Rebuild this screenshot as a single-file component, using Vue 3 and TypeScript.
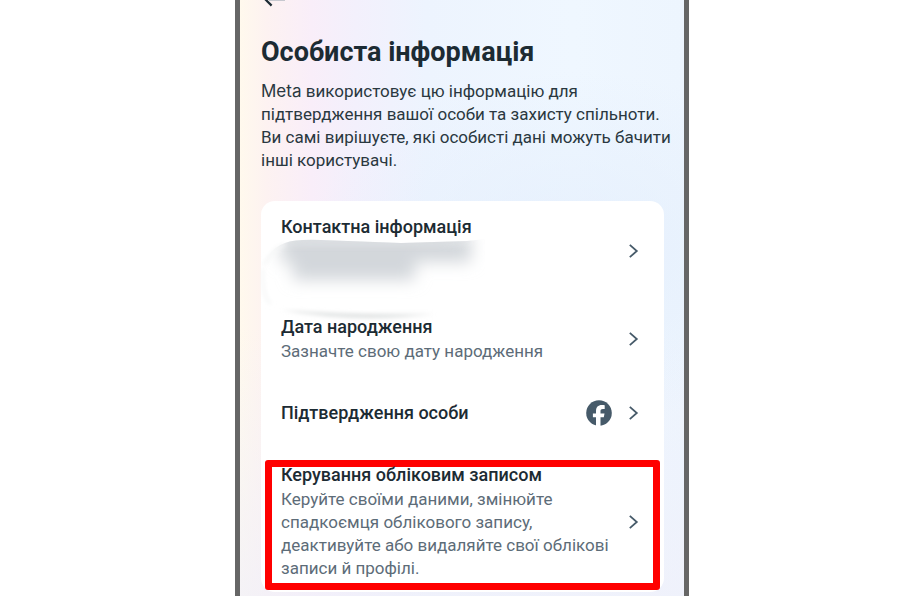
<script setup lang="ts">
interface Row {
  title: string
  description?: string
  redacted?: boolean
  facebook?: boolean
  highlighted?: boolean
}

const rows: Row[] = [
  { title: 'Контактна інформація', redacted: true },
  { title: 'Дата народження', description: 'Зазначте свою дату народження' },
  { title: 'Підтвердження особи', facebook: true },
  {
    title: 'Керування обліковим записом',
    description:
      'Керуйте своїми даними, змінюйте спадкоємця облікового запису, деактивуйте або видаляйте свої облікові записи й профілі.',
    highlighted: true,
  },
]
</script>

<template>
  <div class="page">
    <main class="phone">
      <button class="back" type="button" aria-label="Назад">
        <svg width="24" height="8" viewBox="0 0 24 8" aria-hidden="true">
          <path d="M1 -2 8.6 5.6" fill="none" stroke="#1c2b33" stroke-width="2.2" />
          <path d="M6 0H22" fill="none" stroke="#b9bfc6" stroke-width="1.6" />
        </svg>
      </button>
      <h1>Особиста інформація</h1>
      <p class="intro">
        <span class="brand">Meta</span> використовує цю інформацію для підтвердження вашої особи та
        захисту спільноти. Ви самі вирішуєте, які особисті дані можуть бачити інші користувачі.
      </p>
      <ul class="card">
        <li v-for="row in rows" :key="row.title">
          <a href="#" class="row" :class="{ highlighted: row.highlighted, single: row.facebook }">
            <span class="copy">
              <span class="title">{{ row.title }}</span>
              <span v-if="row.description" class="description">{{ row.description }}</span>
              <svg
                v-if="row.redacted"
                class="smudge"
                height="47"
                width="210"
                viewBox="0 0 210 47"
                aria-hidden="true"
              >
                <defs>
                  <filter id="soft" x="-20%" y="-60%" width="140%" height="220%">
                    <feGaussianBlur stdDeviation="8" />
                  </filter>
                  <filter id="edge" x="-10%" y="-60%" width="120%" height="220%">
                    <feGaussianBlur stdDeviation="2" />
                  </filter>
                  <linearGradient id="fade" x1="0" y1="0" x2="1" y2="0">
                    <stop offset="0" stop-color="#dfe2e4" />
                    <stop offset="0.8" stop-color="#dfe2e4" />
                    <stop offset="1" stop-color="#fff" stop-opacity="0" />
                  </linearGradient>
                  <clipPath id="brush">
                    <path d="M-20 80V24Q-8 8 4 4Q14 0 40 1L120 4L186 2L204 0V80Z" />
                  </clipPath>
                </defs>
                <g clip-path="url(#brush)">
                  <path d="M4 -6H190V23H134V41H12V23H-2Z" fill="#d3d7db" filter="url(#soft)" />
                  <path d="M4 2Q60 -3 120 3L200 0V9H-6Z" fill="url(#fade)" filter="url(#edge)" opacity="0.4" />
                </g>
                <path
                  d="M-17 26Q-8 10 4 5M-18 30Q-20 56 -10 65"
                  fill="none"
                  stroke="#f6f7f7"
                  stroke-width="3"
                  filter="url(#edge)"
                />
                <path d="M0 71Q76 84 154 75Q76 77 0 71Z" fill="#d8dbdb" filter="url(#edge)" />
              </svg>
            </span>
            <svg v-if="row.facebook" class="facebook" width="26" height="26" viewBox="0 0 26 26" role="img" aria-label="Facebook">
              <circle cx="13" cy="13" r="12.8" fill="#465a69" />
              <path
                d="M10 26V17.2H6.9V13.4H10V11.2C10 7.1 12 5 15.9 5C16.8 5 17.9 5.1 18.7 5.3V9C18.1 8.9 17.5 8.9 16.9 8.9C15.1 8.9 14.5 9.6 14.5 11.3V13.4H18.5L17.8 17.2H14.5V26Z"
                fill="#fff"
              />
            </svg>
            <svg class="chevron" width="10" height="16" viewBox="0 0 10 16" aria-hidden="true">
              <path d="M0.8 1.8 7.8 8 0.8 14.2" fill="none" stroke="#465a69" stroke-width="1.8" />
            </svg>
          </a>
        </li>
      </ul>
    </main>
  </div>
</template>

<style>
body {
  margin: 0;
  background: #fff;
}
</style>

<style scoped>
.page {
  box-sizing: border-box;
  padding: 0 211px 4px 235px;
  font-family: Roboto, "Noto Sans", sans-serif;
  color: #1c2b33;
}

.phone {
  padding: 0 20px 4px 21px;
  border: solid #666;
  border-width: 0 5px;
  background:
    linear-gradient(180deg, transparent 55%, rgba(240, 240, 250, 0.7) 100%),
    radial-gradient(ellipse 60% 30% at 75% 42%, rgba(226, 237, 252, 0.7), transparent),
    linear-gradient(90deg, #fff9ed 0%, #fdf2f1 6%, #f9eef9 16%, #f3f0fc 26%, #edf4fe 42%, #eff7ff 75%, #edf5fe 100%);
}

.back {
  display: block;
  height: 8px;
  margin: 0;
  padding: 0 2px;
  border: 0;
  background: none;
}

.back svg {
  display: block;
}

h1 {
  margin: 0;
  padding: 28px 0 11px;
  font-size: 27px;
  font-weight: 700;
  line-height: 33px;
}

.intro {
  margin: 0 -12px 29px 0;
  font-size: 17px;
  line-height: 23px;
  color: #2a3840;
}

.brand {
  font-family: Inter, Roboto, sans-serif;
}

.card {
  margin: 0;
  padding: 0;
  list-style: none;
  border-radius: 14px;
  background: #fff;
}

.row {
  position: relative;
  display: flex;
  align-items: center;
  gap: 17px;
  padding: 14px 25px 15px 20px;
  color: inherit;
  text-decoration: none;
}

.row.single {
  padding-top: 22px;
  padding-bottom: 22px;
}

.row.highlighted {
  padding-top: 15px;
  padding-bottom: 12px;
}

.row.highlighted::after {
  content: "";
  position: absolute;
  inset: 12px 4px 2px;
  border: 7px solid #f00;
  border-radius: 3px;
  pointer-events: none;
}

.copy {
  flex: 1;
  min-width: 0;
}

.title,
.description {
  display: block;
}

.title {
  position: relative;
  z-index: 1;
  font-size: 18px;
  font-weight: 500;
  line-height: 24px;
}

.description {
  margin-top: 1px;
  font-size: 17px;
  line-height: 23px;
  color: #5d6c78;
}

.smudge {
  display: block;
  overflow: visible;
}

.chevron,
.facebook {
  flex: none;
}
</style>
